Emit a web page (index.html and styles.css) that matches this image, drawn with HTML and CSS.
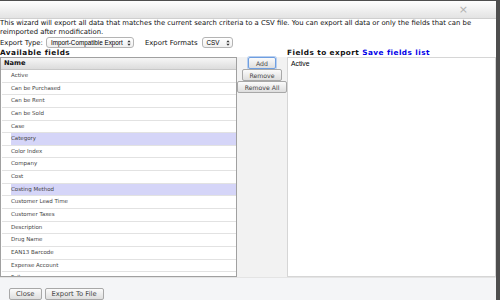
FILE: index.html
```html
<!DOCTYPE html>
<html lang="en">
<head>
    <meta charset="UTF-8">
    <title>Export Data</title>
    <link rel="stylesheet" href="styles.css">
</head>
<body>

<div class="dialog">
    <div class="titlebar"><span class="close">&times;</span></div>

    <div class="content">
        <p class="intro">This wizard will export all data that matches the current search criteria to a CSV file. You can export all data or only the fields that can be reimported after modification.</p>

        <div class="options">
            <span>Export Type:</span>
            <span class="select type">Import-Compatible Export
                <svg class="arrows" viewBox="0 0 6 9"><path d="M0.5 3.5 L3 0.5 L5.5 3.5 Z M0.5 5.5 L3 8.5 L5.5 5.5 Z"/></svg>
            </span>
            <span>Export Formats</span>
            <span class="select format">CSV
                <svg class="arrows" viewBox="0 0 6 9"><path d="M0.5 3.5 L3 0.5 L5.5 3.5 Z M0.5 5.5 L3 8.5 L5.5 5.5 Z"/></svg>
            </span>
        </div>

        <div class="columns">
            <div class="label">Available fields</div>
            <div></div>
            <div class="label">Fields to export <a href="#">Save fields list</a></div>

            <!-- Available fields list -->
            <div class="field-list">
                <div class="list-head">Name</div>
                <div class="list-row"><span>Active</span></div>
                <div class="list-row"><span>Can be Purchased</span></div>
                <div class="list-row"><span>Can be Rent</span></div>
                <div class="list-row"><span>Can be Sold</span></div>
                <div class="list-row"><span>Case</span></div>
                <div class="list-row selected"><span>Category</span></div>
                <div class="list-row"><span>Color Index</span></div>
                <div class="list-row"><span>Company</span></div>
                <div class="list-row"><span>Cost</span></div>
                <div class="list-row selected"><span>Costing Method</span></div>
                <div class="list-row"><span>Customer Lead Time</span></div>
                <div class="list-row"><span>Customer Taxes</span></div>
                <div class="list-row"><span>Description</span></div>
                <div class="list-row"><span>Drug Name</span></div>
                <div class="list-row"><span>EAN13 Barcode</span></div>
                <div class="list-row"><span>Expense Account</span></div>
                <div class="list-row"><span>Followers</span></div>
            </div>

            <div class="actions">
                <button class="btn focused">Add</button>
                <button class="btn">Remove</button>
                <button class="btn">Remove All</button>
            </div>

            <!-- Fields to export -->
            <div class="export-box">
                <div class="export-item">Active</div>
            </div>
        </div>
    </div>

    <div class="footer">
        <button class="btn">Close</button>
        <button class="btn">Export To File</button>
    </div>
</div>

</body>
</html>
```

FILE: styles.css
```css
* {
    margin: 0;
    padding: 0;
    box-sizing: border-box;
}

body {
    width: 500px;
    height: 300px;
    overflow: hidden;
    font-family: "DejaVu Sans", Verdana, sans-serif;
    font-size: 6.9px;
    color: #111;
    background-color: #4e4e4e;
    background-image: radial-gradient(circle, #3a3a3a 2px, transparent 2.5px);
    background-size: 15px 15px;
    background-position: 4px 2px;
}

.dialog {
    width: 496px;
    height: 299px;
    margin-top: 1px;
    background-color: #fff;
    display: flex;
    flex-direction: column;
}

.titlebar {
    height: 18px;
    background: linear-gradient(#fefefe, #e3e3e3);
    border-bottom: 1px solid #cfcfcf;
    display: flex;
    justify-content: flex-end;
    align-items: center;
    padding-right: 28px;
}

.close {
    font-size: 11px;
    color: #b0b0b0;
    line-height: 1;
}

.intro {
    font-size: 6.85px;
    line-height: 9px;
    padding-right: 4px;
}

.options {
    height: 11px;
    display: flex;
    align-items: center;
    gap: 3px;
}

.select {
    display: inline-flex;
    align-items: center;
    justify-content: space-between;
    height: 11px;
    padding: 0 2px 0 4px;
    background: linear-gradient(#ffffff, #f0f0f0);
    border: 1px solid #b4b4b4;
    border-radius: 3px;
    color: #000;
    font-family: "Liberation Sans", Arial, sans-serif;
    font-size: 6.3px;
    white-space: nowrap;
}

.select.type {
    width: 88px;
    margin-right: 8px;
}

.select.format {
    width: 31px;
    margin-left: 1px;
}

.arrows {
    width: 4px;
    height: 6px;
    fill: #333;
    flex-shrink: 0;
}

.columns {
    display: grid;
    grid-template-columns: 237px 50px 209px;
    grid-template-rows: 9px 220px;
}

.label {
    font-weight: bold;
    font-size: 7.3px;
    letter-spacing: 0.45px;
    line-height: 9px;
    white-space: nowrap;
}

.label a {
    color: #0000e8;
    text-decoration: none;
}

.field-list {
    border: 1px solid #a0a0a0;
    overflow: hidden;
}

.list-head {
    height: 12px;
    line-height: 11px;
    padding-left: 3px;
    font-size: 6.7px;
    font-weight: bold;
    background: linear-gradient(#f6f6f6, #dcdcdc);
    border-bottom: 1px solid #c8c8c8;
}

.list-row {
    height: 12.65px;
    margin-left: 1px;
    border-bottom: 1px solid #e2e2e2;
    padding-left: 9px;
    font-size: 5.5px;
    color: #444;
}

.list-row span {
    display: block;
    height: 100%;
    padding-top: 2px;
}

.list-row.selected span {
    background-color: #d5d5f8;
}

.actions {
    background-color: #f2f2f2;
    display: flex;
    flex-direction: column;
    align-items: center;
}

.btn {
    height: 12px;
    padding: 0 5px;
    font-family: "DejaVu Sans", Verdana, sans-serif;
    font-size: 6.2px;
    color: #444;
    background: linear-gradient(#fbfbfb, #dedede);
    border: 1px solid #a8a8a8;
    border-radius: 2px;
}

.actions .btn:first-child {
    width: 28px;
}

.actions .btn:nth-child(2) {
    width: 40px;
}

.actions .btn:nth-child(3) {
    width: 50px;
}

.btn.focused {
    border-color: #6f9ee0;
    box-shadow: 0 0 0 1px #b7cff0;
}

.export-box {
    background-color: #fff;
    border: 1px solid #d6d6d6;
    padding: 2px 3px;
    color: #000;
    font-family: "Liberation Sans", Arial, sans-serif;
    font-size: 6.8px;
}

.footer {
    flex: 1;
    background-color: #f4f5f7;
    border-top: 1px solid #e4e4e4;
    display: flex;
    align-items: flex-end;
    gap: 3px;
    padding-left: 9px;
}

.footer .btn {
    height: 12px;
    padding: 0 6px;
    font-size: 6.8px;
}
```
